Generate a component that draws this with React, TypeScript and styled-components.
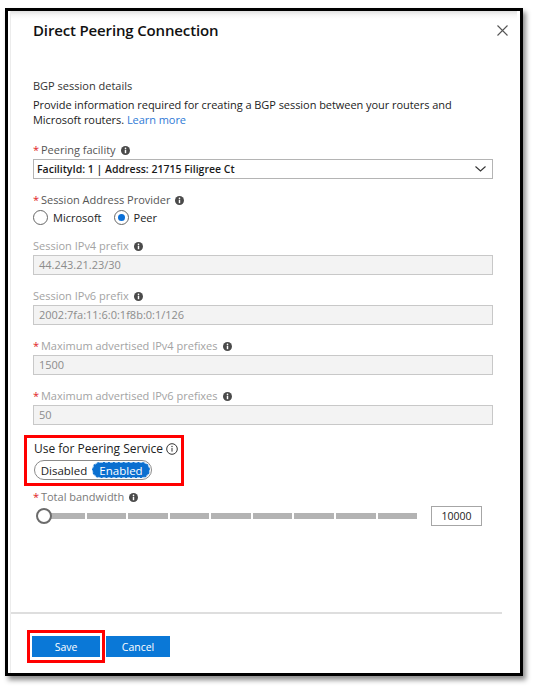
import React from 'react';
import styled, { createGlobalStyle } from 'styled-components';

const Global = createGlobalStyle`
  html, body { margin: 0; padding: 0; background: #fff; }
  body { font-family: "Open Sans", "Noto Sans", sans-serif; color: #222; }
  * { box-sizing: border-box; }
`;

const Page = styled.div`
  width: 536px;
  height: 691px;
  padding: 8px 0 0 5px;
`;

const Frame = styled.div`
  width: 518px;
  height: 668px;
  border: 3px solid #000;
  box-shadow: 3px 4px 5px rgba(0, 0, 0, 0.45);
  background: #fff;
  display: flex;
`;

const Panel = styled.div`
  flex: 1;
  margin: 0 3px 0 2px;
  border-left: 1px solid #ececec;
  display: flex;
  flex-direction: column;
`;

const Header = styled.div`
  display: flex;
  align-items: center;
  justify-content: space-between;
  padding: 8px 9px 0 22px;
  background: linear-gradient(#e0e0e0 0px, #f6f6f6 4px, #fff 8px);
`;

const Title = styled.h1`
  margin: 0;
  font-size: 15px;
  line-height: 22px;
  font-weight: 600;
  color: #111;
  letter-spacing: -0.15px;
`;

const CloseButton = styled.button`
  border: 0;
  background: none;
  padding: 0;
  width: 12px;
  height: 12px;
  display: flex;
  align-items: center;
  justify-content: center;
  color: #555;
`;

const Body = styled.div`
  flex: 1;
  padding: 37px 24px 0 22px;
  display: flex;
  flex-direction: column;
`;

const SectionTitle = styled.div`
  font-size: 11px;
  line-height: 16px;
  color: #333;
`;

const Description = styled.p`
  margin: 3px 0 0;
  font-size: 11px;
  line-height: 15px;
  color: #1c1c1c;
  letter-spacing: -0.05px;
`;

const Link = styled.a`
  color: #2f7ad6;
  text-decoration: none;
`;

const Fields = styled.div`
  margin-top: 15px;
  display: flex;
  flex-direction: column;
  gap: 13px;
`;

const Field = styled.div`
  display: flex;
  flex-direction: column;
  gap: 1px;
`;

const Label = styled.div<{ $tone?: 'normal' | 'muted' | 'disabled' }>`
  display: flex;
  align-items: center;
  font-size: 11px;
  line-height: 16px;
  height: 16px;
  color: ${(p) => (p.$tone === 'disabled' ? '#a3a3a3' : p.$tone === 'muted' ? '#7a7a7a' : '#555')};
  gap: 5px;
`;

const Required = styled.span`
  color: #e0201b;
  margin-right: -1px;
  width: 4px;
`;

const TextBox = styled.div`
  height: 20px;
  border: 1px solid #c8c8c8;
  background: #f3f3f3;
  font-size: 11px;
  line-height: 18px;
  padding-left: 5px;
  color: #8c8c8c;
`;

const Select = styled.div`
  height: 20px;
  border: 1px solid #b4b4b4;
  background: #fff;
  display: flex;
  align-items: center;
  justify-content: space-between;
  padding: 0 6px 0 3px;
  font-size: 10.5px;
  font-weight: 600;
  color: #1a1a1a;
`;

const RadioRow = styled.div`
  display: flex;
  align-items: center;
  height: 16px;
  gap: 12px;
`;

const RadioOption = styled.label`
  display: flex;
  align-items: center;
  gap: 5px;
  font-size: 11px;
  color: #222;
`;

const RadioCircle = styled.span<{ $checked?: boolean }>`
  width: 15px;
  height: 15px;
  border-radius: 50%;
  border: 1px solid #666;
  background: #fff;
  display: flex;
  align-items: center;
  justify-content: center;
  &::after {
    content: '';
    width: 7px;
    height: 7px;
    border-radius: 50%;
    background: ${(p) => (p.$checked ? '#0a6fd8' : 'transparent')};
  }
`;

const Highlight = styled.div`
  align-self: flex-start;
  margin: -3px 0 -10px -9px;
  border: 3px solid #f00;
  padding: 3px 3px 3px 7px;
  display: flex;
  flex-direction: column;
  gap: 3px;
`;

const ServiceLabel = styled.div`
  display: flex;
  align-items: center;
  gap: 3px;
  font-size: 12px;
  line-height: 16px;
  color: #222;
`;

const Toggle = styled.div`
  width: 118px;
  height: 20px;
  border: 1px solid #8a8a8a;
  border-radius: 10px;
  display: flex;
  align-items: center;
  padding: 1px;
`;

const ToggleOption = styled.span<{ $active?: boolean }>`
  flex: ${(p) => (p.$active ? '0 0 58px' : '1')};
  height: 16px;
  border-radius: 8px;
  display: flex;
  align-items: center;
  justify-content: center;
  font-size: 11.5px;
  color: ${(p) => (p.$active ? '#fff' : '#222')};
  background: ${(p) => (p.$active ? '#0a6fd0' : 'transparent')};
  border: ${(p) => (p.$active ? '1px dashed #9cc8f2' : '0')};
`;

const SliderRow = styled.div`
  display: flex;
  align-items: center;
  height: 20px;
`;

const SliderTrack = styled.div`
  position: relative;
  margin-left: 3px;
  width: 381px;
  height: 16px;
  display: flex;
  align-items: center;
  padding-left: 9px;
  gap: 2px;
`;

const Segment = styled.span`
  flex: 1;
  height: 6px;
  background: #b3b3b3;
`;

const Thumb = styled.span`
  position: absolute;
  left: 0;
  top: 0;
  width: 16px;
  height: 16px;
  border-radius: 50%;
  border: 2px solid #6b6b6b;
  background: #fff;
`;

const NumberBox = styled.div`
  margin-left: 14px;
  width: 51px;
  height: 20px;
  border: 1px solid #a6a6a6;
  background: #fff;
  font-size: 10.5px;
  display: flex;
  align-items: center;
  justify-content: center;
  color: #222;
`;

const Footer = styled.div`
  margin: 0 15px 0 0;
  border-top: 2px solid #dedede;
  padding: 16px 0 10px 16px;
  display: flex;
  align-items: center;
`;

const SaveHighlight = styled.div`
  border: 3px solid #f00;
  padding: 3px 2px;
  display: flex;
`;

const Button = styled.button<{ $w: number }>`
  width: ${(p) => p.$w}px;
  height: 21px;
  border: 0;
  background: #0a78d7;
  color: #fff;
  font-family: "Open Sans", sans-serif;
  font-size: 10.5px;
  font-weight: 500;
  padding: 0;
`;

const CancelWrap = styled.div`
  margin-left: 1px;
  display: flex;
`;

const InfoFilled = () => (
  <svg width="9" height="9" viewBox="0 0 10 10">
    <circle cx="5" cy="5" r="5" fill="#4a4a4a" />
    <rect x="4.2" y="4.2" width="1.6" height="3.8" fill="#fff" />
    <circle cx="5" cy="2.7" r="0.9" fill="#fff" />
  </svg>
);

const InfoOutline = () => (
  <svg width="12" height="12" viewBox="0 0 12 12">
    <circle cx="6" cy="6" r="5.3" fill="none" stroke="#333" strokeWidth="1" />
    <rect x="5.5" y="5" width="1" height="3.6" fill="#333" />
    <circle cx="6" cy="3.5" r="0.7" fill="#333" />
  </svg>
);

const Chevron = () => (
  <svg width="11" height="6" viewBox="0 0 11 6">
    <path d="M0.5 0.5 L5.5 5 L10.5 0.5" fill="none" stroke="#333" strokeWidth="1.1" />
  </svg>
);

const CloseIcon = () => (
  <svg width="11" height="11" viewBox="0 0 11 11">
    <path d="M0.5 0.5 L10.5 10.5 M10.5 0.5 L0.5 10.5" stroke="#555" strokeWidth="1.1" />
  </svg>
);

type FieldDef = { label: string; value: string; required?: boolean };

const textFields: FieldDef[] = [
  { label: 'Session IPv4 prefix', value: '44.243.21.23/30' },
  { label: 'Session IPv6 prefix', value: '2002:7fa:11:6:0:1f8b:0:1/126' },
  { label: 'Maximum advertised IPv4 prefixes', value: '1500', required: true },
  { label: 'Maximum advertised IPv6 prefixes', value: '50', required: true },
];

export default function App() {
  return (
    <Page>
      <Global />
      <Frame>
        <Panel>
          <Header>
            <Title>Direct Peering Connection</Title>
            <CloseButton aria-label="Close">
              <CloseIcon />
            </CloseButton>
          </Header>
          <Body>
            <SectionTitle>BGP session details</SectionTitle>
            <Description>
              Provide information required for creating a BGP session between your routers and
              Microsoft routers. <Link href="#">Learn more</Link>
            </Description>
            <Fields>
              <Field>
                <Label>
                  <span>
                    <Required>*</Required> Peering facility
                  </span>
                  <InfoFilled />
                </Label>
                <Select>
                  <span>FacilityId: 1 | Address: 21715 Filigree Ct</span>
                  <Chevron />
                </Select>
              </Field>
              <Field>
                <Label>
                  <span>
                    <Required>*</Required> Session Address Provider
                  </span>
                  <InfoFilled />
                </Label>
                <RadioRow>
                  <RadioOption>
                    <RadioCircle />
                    Microsoft
                  </RadioOption>
                  <RadioOption>
                    <RadioCircle $checked />
                    Peer
                  </RadioOption>
                </RadioRow>
              </Field>
              {textFields.map((f) => (
                <Field key={f.label}>
                  <Label $tone="disabled">
                    <span>
                      {f.required && <Required>*</Required>}
                      {f.required ? ' ' : ''}
                      {f.label}
                    </span>
                    <InfoFilled />
                  </Label>
                  <TextBox>{f.value}</TextBox>
                </Field>
              ))}
              <Highlight>
                <ServiceLabel>
                  Use for Peering Service
                  <InfoOutline />
                </ServiceLabel>
                <Toggle>
                  <ToggleOption>Disabled</ToggleOption>
                  <ToggleOption $active>Enabled</ToggleOption>
                </Toggle>
              </Highlight>
              <Field>
                <Label $tone="muted">
                  <span>
                    <Required>*</Required> Total bandwidth
                  </span>
                  <InfoFilled />
                </Label>
                <SliderRow>
                  <SliderTrack>
                    {Array.from({ length: 9 }).map((_, i) => (
                      <Segment key={i} />
                    ))}
                    <Thumb />
                  </SliderTrack>
                  <NumberBox>10000</NumberBox>
                </SliderRow>
              </Field>
            </Fields>
          </Body>
          <Footer>
            <SaveHighlight>
              <Button $w={68}>Save</Button>
            </SaveHighlight>
            <CancelWrap>
              <Button $w={64}>Cancel</Button>
            </CancelWrap>
          </Footer>
        </Panel>
      </Frame>
    </Page>
  );
}
